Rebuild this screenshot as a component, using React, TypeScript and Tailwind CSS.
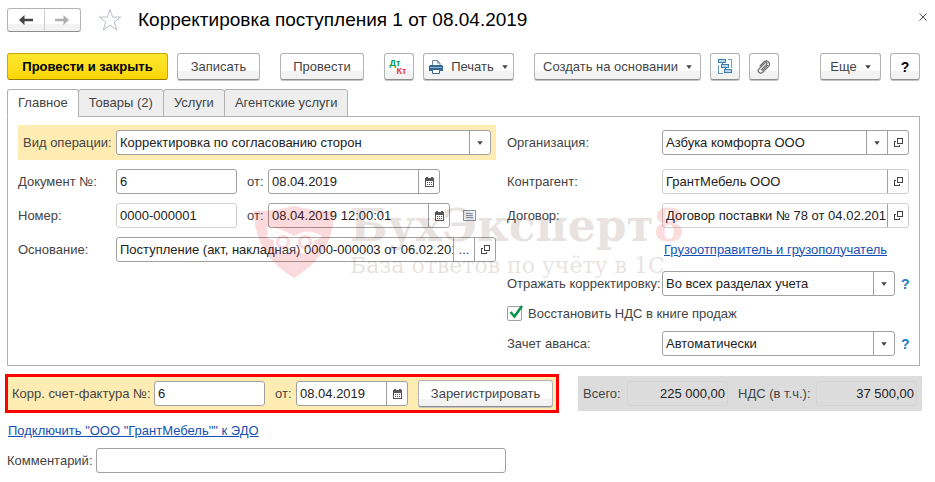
import { useState, type ReactNode } from 'react';

const btnBase =
  'flex h-[27px] shrink-0 items-center justify-center whitespace-nowrap rounded-[3px] border border-[#b3b3b3] border-b-[#8c8c8c] bg-linear-to-b from-white from-70% to-[#f2f2f2] to-70% text-[#444444] shadow-[0_1px_0_#c4c4c4]';

const fieldBase = 'flex h-[25px] items-stretch overflow-hidden rounded-[3px] border bg-white';

function CaretDown() {
  return (
    <svg width="6" height="4" viewBox="0 0 6 4" aria-hidden="true">
      <path d="M0.3 0.3h5.400L3.400 3.400h-.8z" fill="#444444" />
    </svg>
  );
}

function CalendarIcon() {
  return (
    <svg width="9" height="10" viewBox="0 0 9 10" shapeRendering="crispEdges" aria-hidden="true">
      <path d="M1 0h2v1h3V0h2v1h1v9H0V1h1z" fill="#555555" />
      <path d="M1 4h7v5H1z" fill="#ffffff" />
      <path d="M2 5h1v1H2zM4 5h1v1H4zM6 5h1v1H6zM2 7h1v1H2zM4 7h1v1H4zM6 7h1v1H6z" fill="#555555" />
    </svg>
  );
}

function OpenIcon() {
  return (
    <svg width="9" height="9" viewBox="0 0 9 9" fill="none" stroke="#444444" shapeRendering="crispEdges" aria-hidden="true">
      <path d="M3.5 0.5h5v5h-5z" />
      <path d="M2 3.5H0.5v5h5V7" />
    </svg>
  );
}

function Star() {
  return (
    <svg width="24" height="24" viewBox="0 0 24 24" fill="none" stroke="#b4bcc4" aria-hidden="true">
      <path d="M12 1.5l2.7 7.6h8L16.3 14l2.4 8L12 17.3 5.3 22l2.4-8L1.3 9.1h8z" />
    </svg>
  );
}

function Arrow({ back, color }: { back?: boolean; color: string }) {
  return (
    <svg width="14" height="10" viewBox="0 0 14 10" aria-hidden="true">
      <path
        d={back ? 'M0 5L5.5 0v3.8H14v2.4H5.5V10z' : 'M14 5L8.5 0v3.8H0v2.4h8.5V10z'}
        fill={color}
      />
    </svg>
  );
}

function PrinterIcon() {
  return (
    <svg width="14" height="14" viewBox="0 0 14 14" aria-hidden="true">
      <path d="M3.5 6V0.5h5L11 3v3" fill="#ffffff" stroke="#6f8ca5" />
      <path d="M8.5 0.5V3H11" fill="none" stroke="#6f8ca5" />
      <path d="M1 5h12l1 1v5H0V6z" fill="#336690" />
      <path d="M1 7.5h12" stroke="#8fb3d0" />
      <path d="M3.5 9.5h7v4h-7z" fill="#ffffff" stroke="#336690" />
    </svg>
  );
}

function StructureIcon() {
  return (
    <svg width="15" height="15" viewBox="0 0 15 15" fill="none" stroke="#3d7cab" shapeRendering="crispEdges" aria-hidden="true">
      <path d="M0.5 0.5h7v3h-7zM3.5 5.5h7v3h-7zM6.5 10.5h7v3h-7z" fill="#b9d7eb" />
      <path d="M4.5 3.5v2M7.5 8.5v2" />
      <path d="M10 0.5h3.5v8M0.5 6v8h4" stroke="#6b9dc2" />
    </svg>
  );
}

function ClipIcon() {
  return (
    <svg width="14" height="14" viewBox="0 0 14 14" fill="none" stroke="#666666" strokeWidth="1.2" strokeLinecap="round" aria-hidden="true">
      <path d="M4.2 9.8l5.4-5.4a1.1 1.1 0 0 0-1.6-1.6L2 8.8a2.5 2.5 0 0 0 3.600 3.600l6.200-6.200a3.300 3.300 0 0 0-4.600-4.600L3 5.800" />
      <path d="M5.600 10.400l5-5" />
    </svg>
  );
}

function ListIcon() {
  return (
    <svg width="13" height="11" viewBox="0 0 13 11" fill="none" stroke="#8496a8" shapeRendering="crispEdges" aria-hidden="true">
      <path d="M0.500 0.500h12v10h-12z" fill="#f4f7fa" />
      <path d="M3 3.500h7M3 5.500h7M3 7.500h7" />
    </svg>
  );
}

function FieldButton({ label, children }: { label: string; children: ReactNode }) {
  return (
    <button
      type="button"
      aria-label={label}
      className="flex w-[21px] shrink-0 items-center justify-center border-l border-[#a0a0a0] text-[#444444]"
    >
      {children}
    </button>
  );
}

type FieldProps = {
  id: string;
  value: string;
  className: string;
  muted?: boolean;
  children?: ReactNode;
};

function Field({ id, value, className, muted, children }: FieldProps) {
  return (
    <div className={`${fieldBase} ${muted ? 'border-[#d0d0d0]' : 'border-[#a0a0a0]'} ${className}`}>
      <input
        id={id}
        type="text"
        defaultValue={value}
        readOnly={muted}
        className="w-0 min-w-0 flex-1 bg-transparent pl-[3px] text-[#222222] outline-none"
      />
      {children}
    </div>
  );
}

function SelectField({ id, options, className }: { id: string; options: string[]; className: string }) {
  return (
    <div className={`${fieldBase} relative border-[#a0a0a0] ${className}`}>
      <select id={id} className="w-full appearance-none bg-transparent pr-6 pl-[3px] text-[#222222] outline-none">
        {options.map(o => (
          <option key={o}>{o}</option>
        ))}
      </select>
      <span className="pointer-events-none absolute inset-y-0 right-0 flex w-[21px] items-center justify-center border-l border-[#a0a0a0]">
        <CaretDown />
      </span>
    </div>
  );
}

function Watermark() {
  return (
    <div className="pointer-events-none absolute top-[83px] left-[246px] flex gap-4 opacity-15" aria-hidden="true">
      <svg width="80" height="72" viewBox="0 0 80 72" className="mt-[6px]">
        <path d="M0 5Q22 5 40 0q18 5 40 5Q80 48 40 72 0 48 0 5z" fill="#e0101c" />
        <path d="M12 21q14 0 28 9 14-9 28 0-3 4-8 4 2 8-5 12-8 5-15-4-7 9-15 4-7-4-5-12-5 0-8-4 4-2 0-9z" fill="#ffffff" opacity="0.9" />
        <circle cx="29" cy="36" r="7" fill="#e0101c" />
        <circle cx="51" cy="36" r="7" fill="#e0101c" />
        <circle cx="29" cy="36" r="4" fill="#ffffff" />
        <circle cx="51" cy="36" r="4" fill="#ffffff" />
        <path d="M37 42h6l-3 7z" fill="#ffffff" />
      </svg>
      <div className="font-['DejaVu_Serif',serif] whitespace-nowrap text-[#6b4a3c]">
        <div className="text-[44px] leading-[52px] font-bold">
          БухЭксперт<span className="text-[#e8202c]">8</span>
        </div>
        <div className="text-[22px] leading-[28px]">База ответов по учёту в 1С</div>
      </div>
    </div>
  );
}

const tabs = ['Главное', 'Товары (2)', 'Услуги', 'Агентские услуги'];

export default function App() {
  const [tab, setTab] = useState(tabs[0]);

  return (
    <main className="bg-white pt-[7px] pr-[15px] pb-2 pl-[7px] font-['Liberation_Sans',Arial,sans-serif] text-[13px] leading-[16px] text-[#444444]">
      {/* Title */}
      <header className="flex h-[25px] items-center">
        <div className="flex h-[24px] w-[74px] rounded-[3px] border border-[#b3b3b3] border-b-[#8c8c8c] bg-linear-to-b from-white from-70% to-[#f2f2f2] to-70%">
          <button type="button" aria-label="Назад" className="flex flex-1 items-center justify-center border-r border-[#d0d0d0]">
            <Arrow back color="#444444" />
          </button>
          <button type="button" aria-label="Вперед" className="flex flex-1 items-center justify-center">
            <Arrow color="#b0b0b0" />
          </button>
        </div>
        <button type="button" aria-label="В избранное" className="ml-[17px]">
          <Star />
        </button>
        <h1 className="ml-4 flex-1 text-[19px] leading-[24px] whitespace-nowrap text-black">
          Корректировка поступления 1 от 08.04.2019
        </h1>
        <button type="button" aria-label="Закрыть" className="-mr-[11px] flex h-4 w-4 items-center justify-center self-start pt-1">
          <svg width="8" height="8" viewBox="0 0 8 8" stroke="#555555" aria-hidden="true">
            <path d="M0.500 0.500l7 7M7.500 0.500l-7 7" />
          </svg>
        </button>
      </header>

      {/* Commands */}
      <div className="mt-[21px] flex items-center gap-[9px]">
        <button
          type="button"
          className="flex h-[27px] w-[161px] items-center justify-center rounded-[3px] border border-[#c8a800] border-b-[#8f7a00] bg-linear-to-b from-[#ffe82e] to-[#fbd500] font-bold whitespace-nowrap text-black"
        >
          Провести и закрыть
        </button>
        <button type="button" className={`${btnBase} w-[83px]`}>Записать</button>
        <button type="button" className={`${btnBase} ml-[11px] w-[84px]`}>Провести</button>
        <button type="button" aria-label="Дт Кт" className={`${btnBase} ml-[11px] w-[30px]`}>
          <span className="flex flex-col text-[9px] leading-[8px] font-bold">
            <span className="pr-2 text-[#009646]">Дт</span>
            <span className="pl-[5px] text-[#e33b3b]">Кт</span>
          </span>
        </button>
        <button type="button" className={`${btnBase} w-[91px] gap-2`}>
          <PrinterIcon />
          Печать
          <CaretDown />
        </button>
        <button type="button" className={`${btnBase} ml-[11px] w-[167px] gap-2`}>
          Создать на основании
          <CaretDown />
        </button>
        <button type="button" aria-label="Структура подчиненности" className={`${btnBase} w-[30px]`}>
          <StructureIcon />
        </button>
        <button type="button" aria-label="Присоединенные файлы" className={`${btnBase} w-[30px]`}>
          <ClipIcon />
        </button>
        <button type="button" className={`${btnBase} ml-auto w-[61px] gap-2`}>
          Еще
          <CaretDown />
        </button>
        <button type="button" aria-label="Справка" className={`${btnBase} w-[30px]`}>
          <span className="text-[14px] font-bold text-black">?</span>
        </button>
      </div>

      {/* Tabs */}
      <div role="tablist" className="relative z-10 mt-[9px] flex">
        {tabs.map(t => (
          <button
            key={t}
            type="button"
            role="tab"
            aria-selected={t === tab}
            onClick={() => setTab(t)}
            className={`-mr-px -mb-px h-[28px] rounded-t-[3px] border border-[#b0b0b0] px-[10px] whitespace-nowrap ${
              t === tab ? 'border-b-white bg-white' : 'bg-[#eeeeee]'
            }`}
          >
            {t}
          </button>
        ))}
      </div>

      <section className="relative flex gap-[11px] border border-[#b0b0b0] px-[10px] pt-[8px] pb-[9px]">
        <div className="flex flex-1 flex-col gap-[9px]">
          <div className="-mb-[5px] flex items-center bg-[#ffecb3] p-[5px]">
            <label htmlFor="operation" className="w-[93px] whitespace-nowrap">Вид операции:</label>
            <SelectField id="operation" className="flex-1" options={['Корректировка по согласованию сторон', 'Исправление в первичных документах']} />
          </div>
          <div className="mt-[5px] flex items-center">
            <label htmlFor="doc-number" className="w-[98px]">Документ №:</label>
            <Field id="doc-number" value="6" className="w-[121px]" />
            <label htmlFor="doc-date" className="ml-[10px] w-[21px]">от:</label>
            <Field id="doc-date" value="08.04.2019" className="w-[172px]">
              <FieldButton label="Выбрать дату"><CalendarIcon /></FieldButton>
            </Field>
          </div>
          <div className="flex items-center">
            <label htmlFor="number" className="w-[98px]">Номер:</label>
            <Field id="number" value="0000-000001" muted className="w-[121px]" />
            <label htmlFor="date" className="ml-[10px] w-[21px]">от:</label>
            <Field id="date" value="08.04.2019 12:00:01" className="w-[182px]">
              <FieldButton label="Выбрать дату"><CalendarIcon /></FieldButton>
            </Field>
            <button type="button" aria-label="Список" className="ml-[13px]">
              <ListIcon />
            </button>
          </div>
          <div className="flex items-center">
            <label htmlFor="basis" className="w-[98px]">Основание:</label>
            <Field id="basis" value="Поступление (акт, накладная) 0000-000003 от 06.02.201" className="flex-1">
              <FieldButton label="Выбрать">...</FieldButton>
              <FieldButton label="Открыть"><OpenIcon /></FieldButton>
            </Field>
          </div>
        </div>

        <div className="flex w-[402px] flex-col gap-[9px] pt-[5px]">
          <div className="mb-[5px] flex items-center">
            <label htmlFor="company" className="w-[155px]">Организация:</label>
            <Field id="company" value="Азбука комфорта ООО" className="flex-1">
              <FieldButton label="Выбрать"><CaretDown /></FieldButton>
              <FieldButton label="Открыть"><OpenIcon /></FieldButton>
            </Field>
          </div>
          <div className="flex items-center">
            <label htmlFor="partner" className="w-[155px]">Контрагент:</label>
            <Field id="partner" value="ГрантМебель ООО" muted className="flex-1">
              <FieldButton label="Открыть"><OpenIcon /></FieldButton>
            </Field>
          </div>
          <div className="flex items-center">
            <label htmlFor="contract" className="w-[155px]">Договор:</label>
            <Field id="contract" value="Договор поставки № 78 от 04.02.201" muted className="flex-1">
              <FieldButton label="Открыть"><OpenIcon /></FieldButton>
            </Field>
          </div>
          <div className="flex h-[25px] items-center pl-[157px]">
            <a href="#shipper" className="whitespace-nowrap text-[#1450b4] underline">Грузоотправитель и грузополучатель</a>
          </div>
          <div className="flex items-center">
            <label htmlFor="reflect" className="w-[155px] whitespace-nowrap">Отражать корректировку:</label>
            <SelectField id="reflect" className="flex-1" options={['Во всех разделах учета', 'Только в учете НДС']} />
            <button type="button" aria-label="Подсказка" className="w-[14px] pl-[6px] text-[14px] font-bold text-[#1a80c4]">?</button>
          </div>
          <label className="flex h-[17px] items-center gap-[6px]">
            <span className="relative flex">
              <input type="checkbox" defaultChecked className="peer h-[15px] w-[15px] appearance-none rounded-[2px] border border-[#a0a0a0] bg-white" />
              <svg width="15" height="14" viewBox="0 0 15 14" fill="none" className="pointer-events-none absolute -top-px left-[2px] hidden peer-checked:block" aria-hidden="true">
                <path d="M1.500 7l4 4.500L13 1" stroke="#009646" strokeWidth="2.600" />
              </svg>
            </span>
            Восстановить НДС в книге продаж
          </label>
          <div className="flex items-center">
            <label htmlFor="advance" className="w-[155px]">Зачет аванса:</label>
            <SelectField id="advance" className="flex-1" options={['Автоматически', 'По документу', 'Не зачитывать']} />
            <button type="button" aria-label="Подсказка" className="w-[14px] pl-[6px] text-[14px] font-bold text-[#1a80c4]">?</button>
          </div>
        </div>

        <Watermark />
      </section>

      {/* Invoice and totals */}
      <div className="-mx-[2px] mt-[8px] flex items-center justify-between">
        <div className="flex h-[39px] items-center border-3 border-[#ff0000] bg-[#ffecb3] px-[3px]">
          <label htmlFor="invoice" className="w-[143px] pl-px whitespace-nowrap">Корр. счет-фактура №:</label>
          <Field id="invoice" value="6" className="w-[111px]" />
          <label htmlFor="invoice-date" className="ml-[10px] w-[21px]">от:</label>
          <Field id="invoice-date" value="08.04.2019" className="w-[112px]">
            <FieldButton label="Выбрать дату"><CalendarIcon /></FieldButton>
          </Field>
          <button type="button" className={`${btnBase} ml-[10px] w-[135px]`}>Зарегистрировать</button>
        </div>
        <div className="flex h-[35px] items-center bg-[#dcdcdc] px-[5px]">
          <label htmlFor="total" className="w-[44px]">Всего:</label>
          <input id="total" readOnly defaultValue="225 000,00" className="h-[25px] w-[101px] rounded-[3px] border border-[#d4d4d4] pr-[2px] text-right text-[#222222]" />
          <label htmlFor="vat" className="ml-[10px] w-[78px] whitespace-nowrap">НДС (в т.ч.):</label>
          <input id="vat" readOnly defaultValue="37 500,00" className="h-[25px] w-[101px] rounded-[3px] border border-[#d4d4d4] pr-[2px] text-right text-[#222222]" />
        </div>
      </div>

      <div className="mt-[9px] flex h-[17px] items-center pl-px">
        <a href="#edo" className="text-[#1450b4] underline">Подключить "ООО "ГрантМебель"" к ЭДО</a>
      </div>

      <div className="mt-[9px] flex items-center">
        <label htmlFor="comment" className="w-[89px]">Комментарий:</label>
        <Field id="comment" value="" className="w-[410px]" />
      </div>
    </main>
  );
}
